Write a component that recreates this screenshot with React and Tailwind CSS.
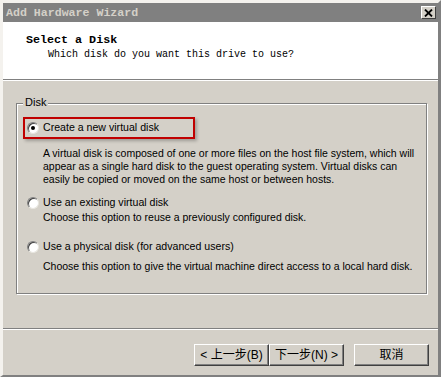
import React from 'react';

const ui = { fontFamily: '"Liberation Sans", Arial, sans-serif' };
const mono = { fontFamily: '"Liberation Mono", "Courier New", monospace' };
const cjk = { fontFamily: '"Liberation Sans", "Noto Sans CJK SC", sans-serif' };

function Radio({ checked }) {
  return (
    <span className="relative inline-block w-[12px] h-[12px] rounded-full bg-white border border-t-[#808080] border-l-[#808080] border-b-[#e8e6e0] border-r-[#e8e6e0] shadow-[inset_1px_1px_0_#404040]">
      {checked && <span className="absolute left-[3px] top-[3px] w-[4px] h-[4px] rounded-full bg-black" />}
    </span>
  );
}

function Btn({ children, className = '' }) {
  return (
    <button
      className={`w-[75px] h-[22px] bg-[#d4d0c8] border border-t-white border-l-white border-r-[#404040] border-b-[#404040] shadow-[inset_-1px_-1px_0_#808080] text-[12px] text-black leading-none flex items-center justify-center ${className}`}
      style={cjk}
    >
      {children}
    </button>
  );
}

function Option({ label, lines, checked, top, descTop }) {
  return (
    <div>
      <div className="flex items-center h-[13px]" style={{ marginTop: top }}>
        <div className="w-[26px] flex justify-end pr-[4px]">
          <Radio checked={checked} />
        </div>
        <span className="text-[10.6px] leading-[13px] text-black whitespace-nowrap">{label}</span>
      </div>
      <div className="pl-[26px] text-[10.5px] leading-[13px] text-black whitespace-nowrap" style={{ marginTop: descTop }}>
        {lines.map((l, i) => (
          <div key={i}>{l}</div>
        ))}
      </div>
    </div>
  );
}

export default function App() {
  return (
    <div className="w-[443px] h-[378px] bg-white" style={ui}>
      <div className="relative w-[441px] h-[377px] bg-[#d4d0c8] border-t-[3px] border-l-[3px] border-t-[#f4f2ee] border-l-[#f4f2ee] border-r-[3px] border-r-[#808080] border-b-2 border-b-[#808080] flex flex-col">
        {/* title bar */}
        <div className="h-[19px] bg-[#808080] flex items-center justify-between pl-[3px] pr-[2px]">
          <span className="text-[11.6px] font-bold text-[#d4d0c8]" style={mono}>
            Add Hardware Wizard
          </span>
          <span className="w-[15px] h-[13px] bg-[#d4d0c8] border border-t-white border-l-white border-r-[#404040] border-b-[#404040] flex items-center justify-center">
            <svg width="9" height="8" viewBox="0 0 9 8">
              <path d="M1 0.5 L8 7.5 M8 0.5 L1 7.5" stroke="#000" strokeWidth="1.8" />
            </svg>
          </span>
        </div>

        {/* header */}
        <div className="h-[58px] bg-white pl-[23px] pt-[11px] border-b border-b-[#808080] shadow-[0_1px_0_#fff]" style={mono}>
          <div className="text-[11.7px] font-bold leading-[14px] text-black">Select a Disk</div>
          <div className="text-[10px] leading-[14px] text-black pl-[22px] mt-[1px]">
            Which disk do you want this drive to use?
          </div>
        </div>

        {/* body */}
        <div className="h-[249px] px-[13px] pt-[23px] border-b border-b-[#808080] shadow-[0_1px_0_#fff]">
          <div className="relative h-[191px] w-[411px] border border-[#808080] shadow-[inset_1px_1px_0_#fff,1px_1px_0_#fff]">
            <span className="absolute left-[6px] -top-[8px] px-[2px] bg-[#d4d0c8] text-[11px] leading-[13px] text-black">
              Disk
            </span>
            <div className="absolute left-[6px] top-[13px] w-[172px] h-[22px] border-2 border-[#c00000] shadow-[2px_2px_3px_rgba(0,0,0,0.25)]" />
            <Option
              checked
              top={17}
              descTop={13}
              label="Create a new virtual disk"
              lines={[
                'A virtual disk is composed of one or more files on the host file system, which will',
                'appear as a single hard disk to the guest operating system. Virtual disks can',
                'easily be copied or moved on the same host or between hosts.',
              ]}
            />
            <Option
              top={10}
              descTop={2}
              label="Use an existing virtual disk"
              lines={['Choose this option to reuse a previously configured disk.']}
            />
            <Option
              top={16}
              descTop={7}
              label="Use a physical disk (for advanced users)"
              lines={['Choose this option to give the virtual machine direct access to a local hard disk.']}
            />
          </div>
        </div>

        {/* buttons */}
        <div className="flex pt-[15px] pl-[191px]">
          <Btn>&lt; 上一步(B)</Btn>
          <Btn>下一步(N) &gt;</Btn>
          <Btn className="ml-[10px]">取消</Btn>
        </div>
      </div>
    </div>
  );
}
